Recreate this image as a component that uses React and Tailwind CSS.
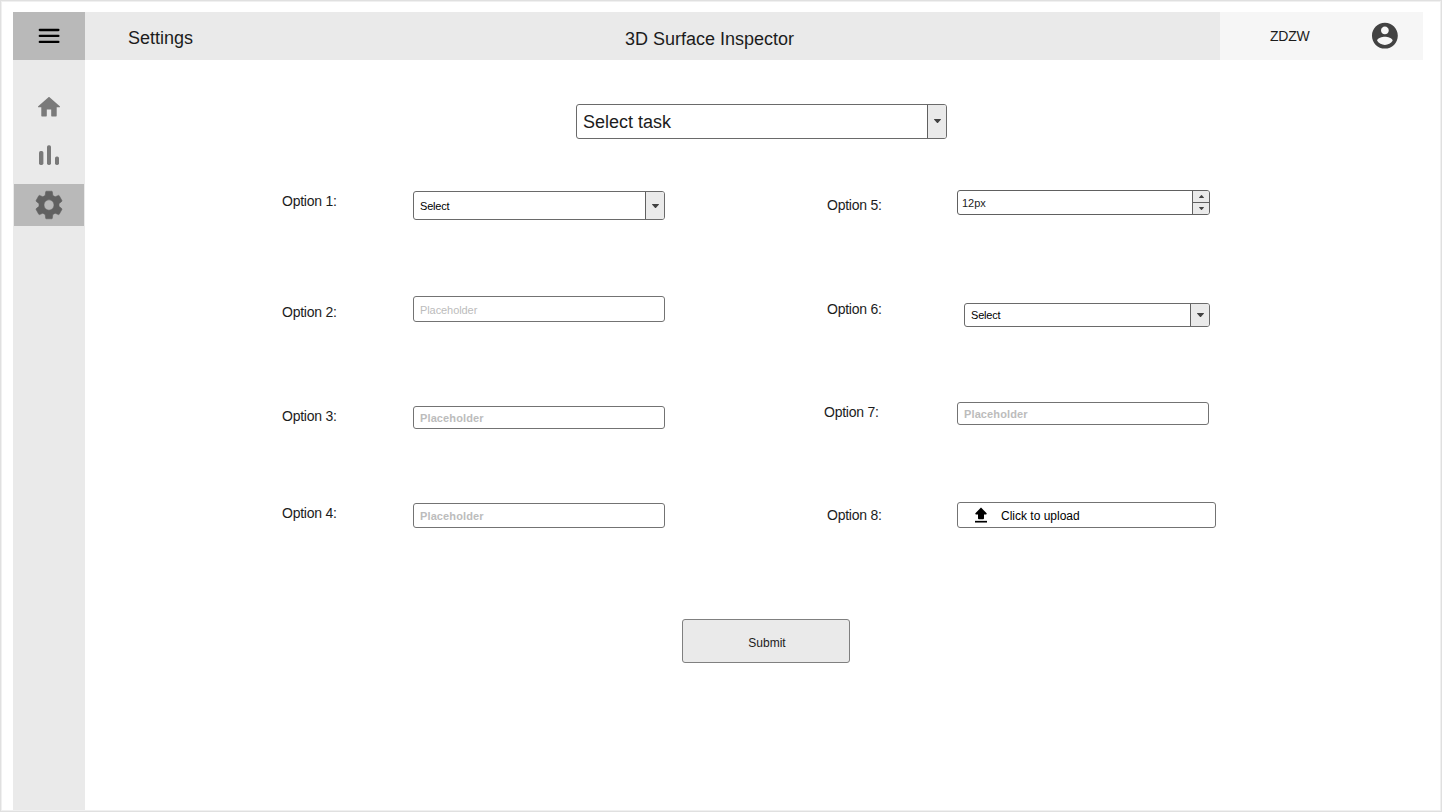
const Caret = ({ className }) => (
  <svg className={className} viewBox="0 0 6 4" preserveAspectRatio="none" fill="#424242">
    <path d="M0 .3Q0 0 .4 0H5.6Q6 0 6 .3 6 .7 5.6 1L3.5 3.7Q3 4.2 2.5 3.7L.4 1Q0 .7 0 .3Z" />
  </svg>
);

const Select = ({ box, text, children }) => (
  <div className={`flex overflow-hidden rounded-[3px] border border-[#6a6a6a] bg-white ${box}`}>
    <div className={`flex flex-1 items-center whitespace-nowrap pl-1.5 ${text}`}>{children}</div>
    <div className="flex w-[19px] items-center justify-center border-l border-[#606060] bg-[#eaeaea]">
      <Caret className="h-1 w-[7px]" />
    </div>
  </div>
);

const Input = ({ box, text }) => (
  <div className={`flex w-[252px] items-start rounded-[3px] border border-[#737373] bg-white pl-1.5 ${box}`}>
    <span className={`text-[11px] leading-3 text-[#bcbcbc] ${text}`}>Placeholder</span>
  </div>
);

const Field = ({ n, label, children }) => (
  <div className="flex items-start">
    <span className={`w-[131px] shrink-0 whitespace-nowrap text-[14px] leading-4 tracking-[-0.25px] ${label}`}>Option {n}:</span>
    {children}
  </div>
);

export default function App() {
  return (
    <div className="h-[812px] w-[1442px] overflow-hidden border border-[#e0e0e0] bg-white font-['Liberation_Sans',Arial,sans-serif] text-[#1c1c1c]">
      <div className="flex h-[810px] flex-col border border-[#f0f0f0] pl-[11px] pt-2.5">
        <header className="flex h-12 w-[1410px] shrink-0">
          <div className="flex w-[72px] items-center justify-center bg-[#b9b9b9]">
            <svg className="h-4 w-[22px]" viewBox="0 0 22 16" stroke="#000" strokeWidth="2.3" strokeLinecap="round">
              <path d="M1.8 2H20.4M1.8 7.9H20.4M1.8 13.9H20.4" />
            </svg>
          </div>
          <div className="flex flex-1 bg-[#eaeaea] text-[18px] leading-5">
            <span className="w-[497px] pl-[43px] pt-4">Settings</span>
            <span className="ml-[43px] whitespace-nowrap pt-[17px]">3D Surface Inspector</span>
          </div>
          <div className="flex w-[203px] items-center bg-[#f6f6f6] pl-[50px]">
            <span className="w-[99px] text-[14px] leading-4 tracking-[-0.2px]">ZDZW</span>
            <svg className="mb-px h-[31px] w-[31px]" viewBox="-0.3 -0.1 24 24" fill="#424242">
              <path d="M12 2C6.48 2 2 6.48 2 12s4.48 10 10 10 10-4.48 10-10S17.52 2 12 2zm0 3c1.66 0 3 1.34 3 3s-1.34 3-3 3-3-1.34-3-3 1.34-3 3-3zm0 14.2c-2.5 0-4.71-1.28-6-3.22.03-1.99 4-3.08 6-3.08 1.99 0 5.97 1.09 6 3.08-1.29 1.94-3.5 3.22-6 3.22z" />
            </svg>
          </div>
        </header>

        <div className="flex flex-1">
          <nav className="flex w-[72px] shrink-0 flex-col items-center bg-[#eaeaea] pt-[37px]">
            <svg className="h-[19.5px] w-[22px]" viewBox="2 3 20 17" preserveAspectRatio="none" fill="#7a7a7a">
              <path d="M10 19.4v-5.4h4v5.4c0 .4.2.6.6.6h3.8c.4 0 .6-.2.6-.6V12h2.5c.5 0 .7-.5.3-.9L12.5 3.3c-.3-.3-.7-.3-1 0L2.2 11.1c-.4.4-.2.9.3.9H5v7.4c0 .4.2.6.6.6h3.8c.4 0 .6-.2.6-.6z" />
            </svg>
            <svg className="mt-7 h-5 w-5" viewBox="0 0 20 20" fill="#7a7a7a">
              <rect x="0" y="6" width="4.4" height="14" rx="1.7" />
              <rect x="8" y="0.3" width="4" height="19.7" rx="1.7" />
              <rect x="16" y="11.5" width="4" height="8.5" rx="1.7" />
            </svg>
            <div className="mt-[19.5px] flex h-[42px] w-[70px] items-center justify-center bg-[#b9b9b9]">
              <svg className="h-[34px] w-8" viewBox="0.5 0.15 23 23.7" preserveAspectRatio="none" fill="#616161" stroke="#616161" strokeWidth="0.4">
                <path d="M19.14 12.94c.04-.3.06-.61.06-.94 0-.32-.02-.64-.07-.94l2.03-1.58c.18-.14.23-.41.12-.61l-1.92-3.32c-.12-.22-.37-.29-.59-.22l-2.39.96c-.5-.38-1.03-.7-1.62-.94L14.4 2.81c-.04-.24-.24-.41-.48-.41h-3.84c-.24 0-.43.17-.47.41L9.25 5.35C8.66 5.59 8.12 5.92 7.63 6.29L5.24 5.33c-.22-.08-.47 0-.59.22L2.74 8.87C2.62 9.08 2.66 9.34 2.86 9.48l2.03 1.58C4.84 11.36 4.8 11.69 4.8 12s.02.64.07.94l-2.03 1.58c-.18.14-.23.41-.12.61l1.92 3.32c.12.22.37.29.59.22l2.39-.96c.5.38 1.03.7 1.62.94l.36 2.54c.05.24.24.41.48.41h3.84c.24 0 .44-.17.47-.41l.36-2.54c.59-.24 1.13-.56 1.62-.94l2.39.96c.22.08.47 0 .59-.22l1.92-3.32c.12-.22.07-.47-.12-.61L19.14 12.94zM12 15.6c-1.98 0-3.6-1.62-3.6-3.6s1.62-3.6 3.6-3.6 3.6 1.62 3.6 3.6S13.98 15.6 12 15.6z" />
              </svg>
            </div>
          </nav>

          <main className="flex flex-1 flex-col pt-11">
            <Select box="ml-[491px] h-[34.5px] w-[371px]" text="pt-px text-[18px] leading-5">Select task</Select>

            <div className="ml-[197px] mt-[51.5px] grid grid-cols-[545px_400px] grid-rows-[105px_107px_100px_26px]">
              <Field n={1} label="mt-[3px]">
                <Select box="mt-px h-[29px] w-[252px]" text="text-[11px] leading-3 tracking-[-0.2px] text-black">Select</Select>
              </Field>
              <Field n={5} label="mt-[7px] -mr-px">
                <div className="flex h-[25px] w-[253px] overflow-hidden rounded-[3px] border border-[#606060] bg-white">
                  <span className="flex flex-1 items-center pl-1 text-[11px] leading-3">12px</span>
                  <div className="flex w-[17px] flex-col border-l border-[#606060] bg-[#eaeaea]">
                    <div className="flex h-3 items-center justify-center border-b border-[#606060]">
                      <Caret className="h-[3px] w-[5px] rotate-180" />
                    </div>
                    <div className="flex flex-1 items-center justify-center">
                      <Caret className="h-[3px] w-[5px]" />
                    </div>
                  </div>
                </div>
              </Field>
              <Field n={2} label="mt-[9px]">
                <Input box="mt-px h-[26px]" text="mt-[7px] tracking-[-0.08px]" />
              </Field>
              <Field n={6} label="mt-1.5">
                <Select box="ml-1.5 mt-2 h-6 w-[246px]" text="text-[11px] leading-3 tracking-[-0.2px] text-black">Select</Select>
              </Field>
              <Field n={3} label="mt-1.5">
                <Input box="mt-1 h-[23px]" text="mt-[5px] font-bold tracking-[0.12px]" />
              </Field>
              <div className="-ml-[3px] flex">
                <Field n={7} label="mt-0.5 mr-0.5">
                  <Input box="h-[23px]" text="mt-[5px] font-bold tracking-[0.12px]" />
                </Field>
              </div>
              <Field n={4} label="mt-[3px]">
                <Input box="mt-px h-[25px]" text="mt-1.5 font-bold tracking-[0.12px]" />
              </Field>
              <Field n={8} label="mt-[5px] -mr-px">
                <div className="flex h-[26px] w-[259px] items-center rounded-[3px] border border-[#737373] bg-white pl-4 text-[12px] leading-[14px] text-black">
                  <svg className="h-4 w-[14px]" viewBox="0 0 14 16">
                    <path d="M1 14.7H13" stroke="#000" strokeWidth="1.7" />
                    <path d="M7 0.5L12.6 6.2Q13 7.4 11.9 7.4H10V11.3Q10 12.2 9.1 12.2H4.9Q4 12.2 4 11.3V7.4H2.1Q1 7.4 1.4 6.2Z" />
                  </svg>
                  <span className="ml-[13px] mt-px">Click to upload</span>
                </div>
              </Field>
            </div>

            <div className="ml-[597px] mt-[91px] flex h-11 w-[168px] items-center justify-center rounded-[3px] border border-[#808080] bg-[#eaeaea] pl-0.5 pt-1 text-[12px] leading-[14px]">
              Submit
            </div>
          </main>
        </div>
      </div>
    </div>
  );
}
